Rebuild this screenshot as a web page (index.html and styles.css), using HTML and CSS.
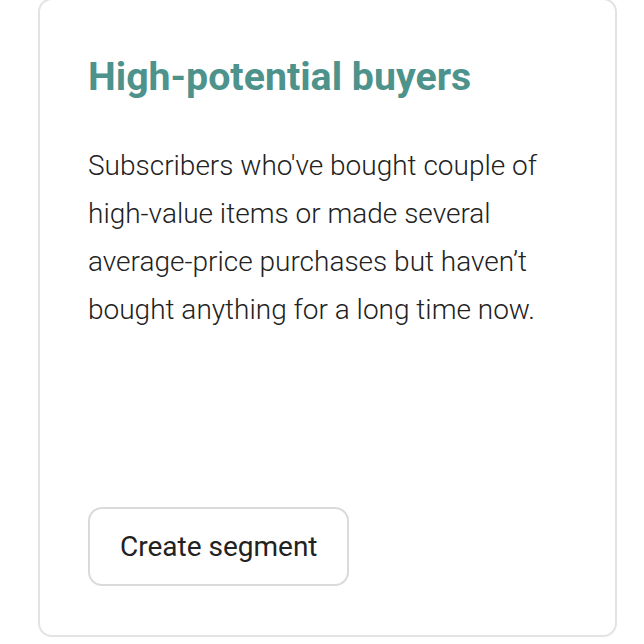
FILE: index.html
```html
<!DOCTYPE html>
<html lang="en">
<head>
<meta charset="utf-8">
<link rel="stylesheet" href="styles.css">
</head>
<body>
  <div class="card">
    <h2 class="card-title">High-potential buyers</h2>
    <p class="card-text">Subscribers who've bought couple of high-value items or made several average-price purchases but haven’t bought anything for a long time now.</p>
    <button class="btn" type="button">Create segment</button>
  </div>
</body>
</html>
```

FILE: styles.css
```css
html, body {
  margin: 0;
  padding: 0;
  background: #ffffff;
}

body {
  font-family: Roboto, "Liberation Sans", sans-serif;
  color: #222222;
}

.card {
  box-sizing: border-box;
  margin: -2px 0 0 38px;
  width: 579px;
  height: 639px;
  border: 2px solid #e3e3e3;
  border-radius: 14px;
  padding: 53px 48px 49px;
  display: flex;
  flex-direction: column;
  align-items: flex-start;
}

.card-title {
  margin: 0;
  font-size: 39.3px;
  line-height: 48px;
  font-weight: 700;
  color: #4d928b;
}

.card-text {
  margin: 41px 0 0;
  font-size: 28px;
  line-height: 48px;
  font-weight: 300;
  color: #222222;
}

.btn {
  margin-top: auto;
  box-sizing: border-box;
  height: 79px;
  padding: 0 29px 0 30px;
  background: #ffffff;
  border: 2px solid #dadada;
  border-radius: 14px;
  font-family: Roboto, "Liberation Sans", sans-serif;
  font-size: 28px;
  line-height: 75px;
  font-weight: 400;
  color: #222222;
}
```
